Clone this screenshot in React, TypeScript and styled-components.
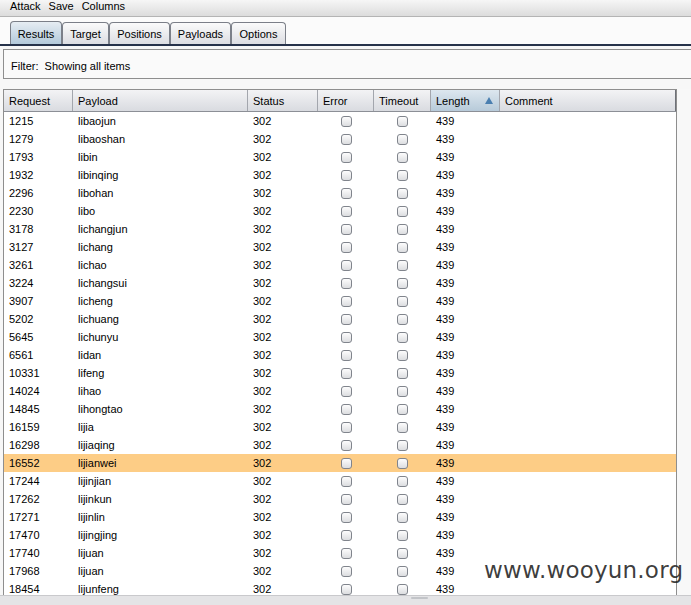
import React from "react";
import styled, { createGlobalStyle } from "styled-components";

const GlobalStyle = createGlobalStyle`
  html, body {
    margin: 0;
    padding: 0;
    background: #f7f7f7;
  }
  body {
    font-family: "Liberation Sans", Arial, sans-serif;
    font-size: 11px;
    color: #000;
  }
`;

const Window = styled.div`
  width: 691px;
  height: 605px;
  overflow: hidden;
  position: relative;
  display: flex;
  flex-direction: column;
  background: #f7f7f7;
`;

const MenuBar = styled.div`
  height: 17px;
  display: flex;
  gap: 8px;
  padding: 0 0 0 10px;
  line-height: 12px;
  background: linear-gradient(#f6f6f6, #dcdcdc);
  border-bottom: 1px solid #b4b4b4;
  box-sizing: border-box;
`;

const TabStrip = styled.div`
  display: flex;
  align-items: flex-end;
  height: 29px;
  padding-left: 10px;
  border-bottom: 2px solid #26324a;
  box-sizing: border-box;
  background: #fbfbfb;
`;

const Tab = styled.div<{ $active?: boolean; $w: number }>`
  width: ${(p) => p.$w}px;
  height: ${(p) => (p.$active ? 23 : 22)}px;
  box-sizing: border-box;
  display: flex;
  align-items: center;
  justify-content: center;
  border: 1px solid #7b7f88;
  border-bottom: none;
  border-radius: 4px 4px 0 0;
  padding-top: 1px;
  background: ${(p) =>
    p.$active
      ? "linear-gradient(#e6edf3, #b3c9da)"
      : "linear-gradient(#fbfbfb, #dcdde2)"};
`;

const FilterBar = styled.div`
  margin: 3px 0 0 3px;
  height: 30px;
  box-sizing: border-box;
  border: 1px solid #8e8e8e;
  border-right: none;
  background: #fafafa;
  display: flex;
  align-items: center;
  padding: 3px 0 0 7px;
  white-space: pre;
`;

const TableArea = styled.div`
  margin: 10px 0 0 3px;
  flex: 1;
  display: flex;
  min-height: 0;
`;

const Table = styled.div`
  width: 674px;
  border: 1px solid #8e8e8e;
  background: #fff;
  overflow: hidden;
  height: 508px;
  box-sizing: border-box;
`;

const RightGutter = styled.div`
  flex: 1;
  background: #f8f8f8;
`;

const COLS = "69px 175px 70px 56px 57px 69px 176px";

const HeaderRow = styled.div`
  display: grid;
  grid-template-columns: ${COLS};
  height: 21px;
  border-bottom: 1px solid #8c8f96;
`;

const HeaderCell = styled.div<{ $sorted?: boolean }>`
  display: flex;
  align-items: center;
  justify-content: space-between;
  padding: 0 6px 0 5px;
  border-right: 1px solid #a3a6ad;
  background: ${(p) =>
    p.$sorted
      ? "linear-gradient(#dde7ef, #b7cad9)"
      : "linear-gradient(#f3f3f5, #d9dbe0)"};
  &:last-child {
    border-right: 1px solid #6e7178;
  }
`;

const SortArrow = styled.span`
  width: 0;
  height: 0;
  border-left: 4px solid transparent;
  border-right: 4px solid transparent;
  border-bottom: 7px solid #4a7fb0;
`;

const Row = styled.div<{ $selected?: boolean }>`
  display: grid;
  grid-template-columns: ${COLS};
  height: 18px;
  align-items: center;
  background: ${(p) => (p.$selected ? "#fdcd86" : "#fff")};
`;

const Cell = styled.div<{ $center?: boolean }>`
  padding-left: ${(p) => (p.$center ? 0 : 5)}px;
  display: flex;
  justify-content: ${(p) => (p.$center ? "center" : "flex-start")};
  margin-top: -1px;
`;

const Check = styled.span`
  width: 11px;
  height: 11px;
  margin-top: 1px;
  box-sizing: border-box;
  border: 1px solid #80848c;
  border-radius: 3px;
  background: linear-gradient(#fdfdfd, #dcdde0);
`;

const BottomBar = styled.div`
  height: 9px;
  background: #e4e4e6;
  border-top: 1px solid #c9c9cc;
  display: flex;
  justify-content: center;
  padding-left: 148px;
`;

const Thumb = styled.div`
  width: 17px;
  height: 2px;
  margin-top: 1px;
  background: #c2c4c8;
  border-radius: 1px;
`;

const Watermark = styled.div`
  position: absolute;
  left: 484px;
  top: 557px;
  font-family: "DejaVu Sans", "Liberation Sans", sans-serif;
  font-size: 23px;
  color: rgba(35, 35, 35, 0.88);
  letter-spacing: 0.2px;
`;

const rows: [string, string][] = [
  ["1215", "libaojun"],
  ["1279", "libaoshan"],
  ["1793", "libin"],
  ["1932", "libinqing"],
  ["2296", "libohan"],
  ["2230", "libo"],
  ["3178", "lichangjun"],
  ["3127", "lichang"],
  ["3261", "lichao"],
  ["3224", "lichangsui"],
  ["3907", "licheng"],
  ["5202", "lichuang"],
  ["5645", "lichunyu"],
  ["6561", "lidan"],
  ["10331", "lifeng"],
  ["14024", "lihao"],
  ["14845", "lihongtao"],
  ["16159", "lijia"],
  ["16298", "lijiaqing"],
  ["16552", "lijianwei"],
  ["17244", "lijinjian"],
  ["17262", "lijinkun"],
  ["17271", "lijinlin"],
  ["17470", "lijingjing"],
  ["17740", "lijuan"],
  ["17968", "lijuan"],
  ["18454", "lijunfeng"],
];

const tabs: [string, number][] = [
  ["Results", 52],
  ["Target", 47],
  ["Positions", 61],
  ["Payloads", 61],
  ["Options", 55],
];

export default function App(): JSX.Element {
  return (
    <>
      <GlobalStyle />
      <Window>
        <MenuBar>
          <span>Attack</span>
          <span>Save</span>
          <span>Columns</span>
        </MenuBar>
        <TabStrip>
          {tabs.map(([t, w], i) => (
            <Tab key={t} $w={w} $active={i === 0}>
              {t}
            </Tab>
          ))}
        </TabStrip>
        <FilterBar>{"Filter:  Showing all items"}</FilterBar>
        <TableArea>
          <Table>
            <HeaderRow>
              <HeaderCell>Request</HeaderCell>
              <HeaderCell>Payload</HeaderCell>
              <HeaderCell>Status</HeaderCell>
              <HeaderCell>Error</HeaderCell>
              <HeaderCell>Timeout</HeaderCell>
              <HeaderCell $sorted>
                Length
                <SortArrow />
              </HeaderCell>
              <HeaderCell>Comment</HeaderCell>
            </HeaderRow>
            {rows.map(([req, payload]) => (
              <Row key={req + payload} $selected={req === "16552"}>
                <Cell>{req}</Cell>
                <Cell>{payload}</Cell>
                <Cell>302</Cell>
                <Cell $center>
                  <Check />
                </Cell>
                <Cell $center>
                  <Check />
                </Cell>
                <Cell>439</Cell>
                <Cell />
              </Row>
            ))}
          </Table>
          <RightGutter />
        </TableArea>
        <BottomBar>
          <Thumb />
        </BottomBar>
        <Watermark>www.wooyun.org</Watermark>
      </Window>
    </>
  );
}
